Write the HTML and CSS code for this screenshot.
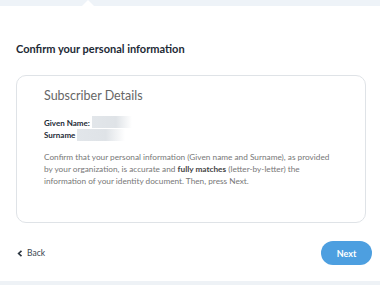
FILE: index.html
```html
<!DOCTYPE html>
<html lang="en">
<head>
<meta charset="UTF-8">
<meta name="viewport" content="width=device-width, initial-scale=1.0">
<title>Confirm your personal information</title>
<link rel="stylesheet" href="styles.css">
</head>
<body>
    <div class="topbar"></div>
    <div class="page">
        <h1>Confirm your personal information</h1>
        <div class="card">
            <h2>Subscriber Details</h2>
            <div class="details">
                <div class="row"><b>Given Name:</b> <span class="hidden given"></span></div>
                <div class="row"><b>Surname</b> <span class="hidden surname"></span></div>
            </div>
            <p class="note">Confirm that your personal information (Given name and Surname), as provided by your organization, is accurate and <b>fully matches</b> (letter-by-letter) the information of your identity document. Then, press Next.</p>
        </div>
        <div class="actions">
            <a href="#" class="back">
                <svg width="6" height="7" viewBox="0 0 6 7"><path d="M4.5 0.8 L1.6 3.5 L4.5 6.2" fill="none" stroke="#2b3540" stroke-width="1.6"/></svg>
                Back
            </a>
            <button type="button" class="next">Next</button>
        </div>
    </div>
    <div class="bottombar"></div>
</body>
</html>
```

FILE: styles.css
```css
body {
    margin: 0;
    padding: 0;
    height: 285px;
    display: flex;
    flex-direction: column;
    font-family: Lato, "Open Sans", sans-serif;
    background: white;
    overflow: hidden;
}

.topbar {
    position: relative;
    height: 6px;
    background: #eef3f8;
}

.topbar::after {
    content: "";
    position: absolute;
    left: 82px;
    bottom: 0;
    border-left: 6px solid transparent;
    border-right: 6px solid transparent;
    border-bottom: 6px solid white;
}

.page {
    flex: 1;
    padding: 0 14px 0 16px;
}

h1 {
    font-size: 11px;
    line-height: 14px;
    font-weight: 700;
    color: #1d2a36;
    margin: 36px 0 19px;
}

.card {
    border: 1px solid #dfe3e7;
    border-radius: 10px;
    padding: 12px 27px 35px;
}

h2 {
    font-size: 12.5px;
    line-height: 16px;
    font-weight: 400;
    color: #666;
    margin: 0 0 14px;
}

.details {
    font-size: 8px;
    line-height: 10px;
    color: #1d2a36;
}

.row {
    display: flex;
    align-items: center;
    gap: 2px;
}

.hidden {
    display: inline-block;
    height: 12px;
    background: linear-gradient(90deg, #e2e6ea, #dfe3e7 60%, #ffffff);
    filter: blur(0.6px);
}

.given {
    width: 40px;
    margin-top: -2px;
}

.surname {
    width: 48px;
    margin-top: 1px;
}

.note {
    max-width: 290px;
    font-size: 8.25px;
    line-height: 12px;
    color: #777;
    margin: 10px 0 0;
}

.note b {
    color: #444;
}

.actions {
    display: flex;
    justify-content: space-between;
    align-items: center;
    margin: 18px -6px 0 0;
}

.back {
    display: flex;
    align-items: center;
    gap: 4px;
    padding-left: 1px;
    font-size: 8.5px;
    color: #3c4650;
    text-decoration: none;
}

.next {
    width: 51px;
    height: 24px;
    border: none;
    border-radius: 12px;
    background: #4d9fe0;
    color: white;
    font-family: Lato, sans-serif;
    font-weight: 700;
    font-size: 9px;
}

.bottombar {
    height: 4px;
    background: #eef2f6;
}
```
